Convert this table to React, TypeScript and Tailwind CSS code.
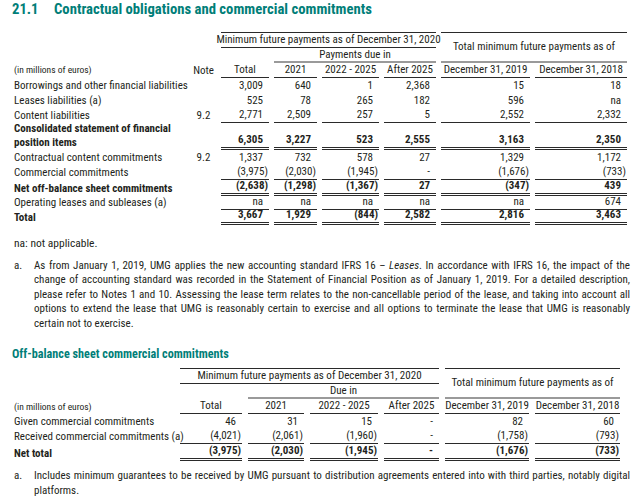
import React from "react";

const FONT = {
  fontFamily: 'Roboto, "Open Sans", "Liberation Sans", sans-serif',
};

type Line = "none" | "single" | "double";

const LINE_CLASS: Record<Line, string> = {
  none: "",
  single: "border-b border-[#2a2a2a]",
  double: "border-b-[3px] border-double border-[#2a2a2a]",
};

function Num({ v, bold, line, h = "h-[15px]" }: { v: string; bold?: boolean; line: Line; h?: string }) {
  const neg = v.startsWith("(");
  return (
    <div
      className={`flex items-end justify-end whitespace-nowrap ${h} ${LINE_CLASS[line]} ${neg ? "pr-[1px]" : "pr-[6px]"} ${
        bold ? "font-bold" : ""
      }`}
    >
      {v}
    </div>
  );
}

type Row = { label: React.ReactNode; note?: string; vals: string[]; bold?: boolean; line: Line; h?: string };

const rows1: Row[] = [
  { label: "Borrowings and other financial liabilities", vals: ["3,009", "640", "1", "2,368", "15", "18"], line: "none" },
  { label: "Leases liabilities (a)", vals: ["525", "78", "265", "182", "596", "na"], line: "none" },
  { label: "Content liabilities", note: "9.2", vals: ["2,771", "2,509", "257", "5", "2,552", "2,332"], line: "single" },
  {
    label: (
      <>
        Consolidated statement of financial
        <br />
        position items
      </>
    ),
    vals: ["6,305", "3,227", "523", "2,555", "3,163", "2,350"],
    bold: true,
    line: "double",
    h: "h-[27px]",
  },
  { label: "Contractual content commitments", note: "9.2", vals: ["1,337", "732", "578", "27", "1,329", "1,172"], line: "none" },
  { label: "Commercial commitments", vals: ["(3,975)", "(2,030)", "(1,945)", "-", "(1,676)", "(733)"], line: "single" },
  { label: "Net off-balance sheet commitments", vals: ["(2,638)", "(1,298)", "(1,367)", "27", "(347)", "439"], bold: true, line: "double", h: "h-[16px]" },
  { label: "Operating leases and subleases (a)", vals: ["na", "na", "na", "na", "na", "674"], line: "single", h: "h-[14px]" },
  { label: "Total", vals: ["3,667", "1,929", "(844)", "2,582", "2,816", "3,463"], bold: true, line: "double" },
];

const rows2: Row[] = [
  { label: "Given commercial commitments", vals: ["46", "31", "15", "-", "82", "60"], line: "none" },
  { label: "Received commercial commitments (a)", vals: ["(4,021)", "(2,061)", "(1,960)", "-", "(1,758)", "(793)"], line: "single" },
  { label: "Net total", vals: ["(3,975)", "(2,030)", "(1,945)", "-", "(1,676)", "(733)"], bold: true, line: "double", h: "h-[17px]" },
];

const HEADS = ["Total", "2021", "2022 - 2025", "After 2025", "December 31, 2019", "December 31, 2018"];

function Cell({ children, className = "" }: { children?: React.ReactNode; className?: string }) {
  return <div className={className}>{children}</div>;
}

// one justified line of a footnote, so breaks match the printed page
function JLine({ children, last }: { children: React.ReactNode; last?: boolean }) {
  return <div className={last ? "whitespace-nowrap" : "whitespace-nowrap text-justify [text-align-last:justify]"}>{children}</div>;
}

export default function App() {
  return (
    <div className="w-[638px] h-[500px] overflow-hidden bg-white text-[#231f20] [font-stretch:75%]" style={FONT}>
      {/* Heading */}
      <div className="flex items-center h-[19px] pl-[12px] text-[14.7px] font-bold text-[#007e78] whitespace-nowrap">
        <span className="w-[42px]">21.1</span>
        <span>Contractual obligations and commercial commitments</span>
      </div>

      {/* Table 1 */}
      <div className="mt-[13px] ml-[14px] grid grid-cols-[172px_25px_48px_43px_57px_52px_89px_92px] gap-x-[5px] text-[11px] leading-[14px] whitespace-nowrap">
        <Cell />
        <Cell />
        <Cell className="col-span-4 h-[16px] flex items-center justify-center border-y border-[#2a2a2a]">
          Minimum future payments as of December 31, 2020
        </Cell>
        <Cell className="col-span-2 row-span-2 flex items-center justify-center border-t border-[#2a2a2a] border-b-2 border-b-[#9a9a9a]">
          Total minimum future payments as of
        </Cell>

        <Cell />
        <Cell />
        <Cell />
        <Cell className="col-span-3 h-[15px] flex items-center justify-center border-b-2 border-[#9a9a9a]">Payments due in</Cell>

        <Cell className="h-[14px] flex items-end text-[9.5px]">(in millions of euros)</Cell>
        <Cell className="flex items-end justify-center">Note</Cell>
        {HEADS.map((t) => (
          <Cell key={t} className="flex items-end justify-center border-b border-[#2a2a2a]">
            {t}
          </Cell>
        ))}

        {rows1.map((r, i) => (
          <React.Fragment key={i}>
            <Cell className={`flex items-end ${r.h ?? "h-[15px]"} ${r.bold ? "font-bold" : ""}`}>
              <span>{r.label}</span>
            </Cell>
            <Cell className="flex items-end justify-center">{r.note}</Cell>
            {r.vals.map((v, j) => (
              <Num key={j} v={v} bold={r.bold} line={r.line} h={r.h} />
            ))}
          </React.Fragment>
        ))}
      </div>

      <p className="mt-[11px] pl-[14px] text-[11.5px] leading-[14.5px]">na: not applicable.</p>

      {/* Footnote */}
      <div className="mt-[8px] flex pl-[14px] pr-[8px] text-[11px] leading-[14.5px]">
        <span className="w-[20px] shrink-0">a.</span>
        <div className="flex-1">
          <JLine>
            As from January 1, 2019, UMG applies the new accounting standard IFRS 16 – <i>Leases</i>. In accordance with IFRS 16, the impact of the
          </JLine>
          <JLine>
            change of accounting standard was recorded in the Statement of Financial Position as of January 1, 2019. For a detailed description,
          </JLine>
          <JLine>
            please refer to Notes 1 and 10. Assessing the lease term relates to the non-cancellable period of the lease, and taking into account all
          </JLine>
          <JLine>
            options to extend the lease that UMG is reasonably certain to exercise and all options to terminate the lease that UMG is reasonably
          </JLine>
          <JLine last>certain not to exercise.</JLine>
        </div>
      </div>

      {/* Section 2 */}
      <div className="mt-[15px] pl-[12px] text-[12.2px] font-bold text-[#007e78] leading-[16px]">
        Off-balance sheet commercial commitments
      </div>

      <div className="mt-[6px] ml-[14px] grid grid-cols-[160px_62px_56px_68px_55px_84px_85px] gap-x-[6px] text-[11px] leading-[14px] whitespace-nowrap">
        <Cell />
        <Cell className="col-span-4 h-[16px] flex items-center justify-center border-y border-[#2a2a2a]">
          Minimum future payments as of December 31, 2020
        </Cell>
        <Cell className="col-span-2 row-span-2 flex items-center justify-center border-t border-[#2a2a2a] border-b-2 border-b-[#9a9a9a]">
          Total minimum future payments as of
        </Cell>

        <Cell />
        <Cell />
        <Cell className="col-span-3 h-[15px] flex items-center justify-center border-b-2 border-[#9a9a9a]">Due in</Cell>

        <Cell className="h-[15px] flex items-end text-[9.5px]">(in millions of euros)</Cell>
        {HEADS.map((t) => (
          <Cell key={t} className="flex items-end justify-center border-b border-[#2a2a2a]">
            {t}
          </Cell>
        ))}

        {rows2.map((r, i) => (
          <React.Fragment key={i}>
            <Cell className={`flex items-end ${r.h ?? "h-[15px]"} ${r.bold ? "font-bold" : ""}`}>{r.label}</Cell>
            {r.vals.map((v, j) => (
              <Num key={j} v={v} bold={r.bold} line={r.line} h={r.h} />
            ))}
          </React.Fragment>
        ))}
      </div>

      <div className="mt-[8px] flex pl-[14px] pr-[8px] text-[11px] leading-[14.5px]">
        <span className="w-[20px] shrink-0">a.</span>
        <div className="flex-1">
          <JLine>
            Includes minimum guarantees to be received by UMG pursuant to distribution agreements entered into with third parties, notably digital
          </JLine>
          <JLine last>platforms.</JLine>
        </div>
      </div>
    </div>
  );
}
